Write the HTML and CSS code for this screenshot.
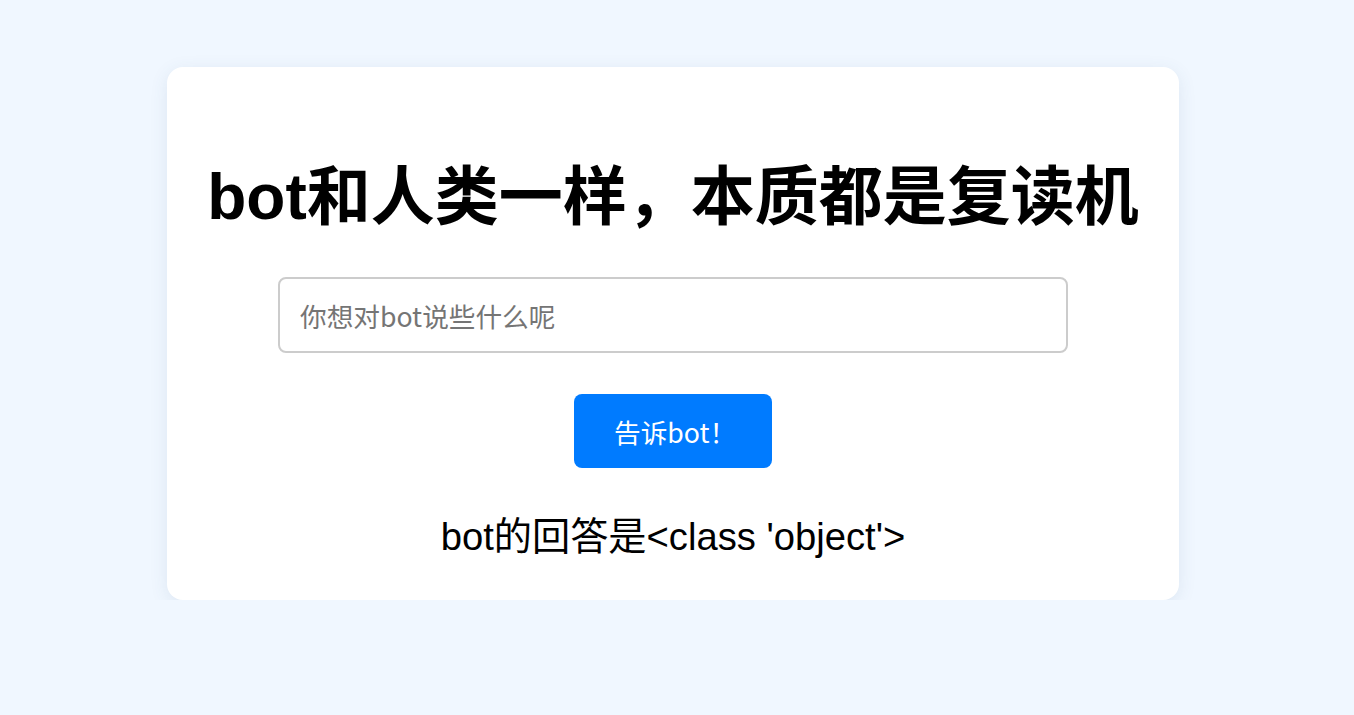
FILE: index.html
```html
<!DOCTYPE html>
<html lang="zh">
<head>
<meta charset="utf-8">
<title>复读机</title>
<link rel="stylesheet" href="styles.css">
</head>
<body>
<div class="page">
  <main class="card">
    <h1 class="title">bot和人类一样，本质都是复读机</h1>
    <input class="ask" type="text" placeholder="你想对bot说些什么呢">
    <button class="send" type="button">告诉bot！</button>
    <p class="answer">bot的回答是&lt;class 'object'&gt;</p>
  </main>
</div>
</body>
</html>
```
FILE: styles.css
```css
* { box-sizing: border-box; }
html, body {
  margin: 0;
  padding: 0;
  background: #f0f7ff;
  font-family: "Liberation Sans", "Noto Sans CJK SC", sans-serif;
}
.page {
  display: flex;
  justify-content: center;
  padding: 67px 8px 0 0;
}
.card {
  width: 1012px;
  background: #ffffff;
  border-radius: 16px;
  box-shadow: 0 4px 18px rgba(60, 90, 130, 0.10);
  display: flex;
  flex-direction: column;
  align-items: center;
  padding: 90px 0 40px;
}
.title {
  margin: 0;
  font-size: 64px;
  line-height: 80px;
  font-weight: bold;
  color: #000;
}
.ask {
  margin-top: 40px;
  width: 790px;
  height: 76px;
  border: 2px solid #cccccc;
  border-radius: 8px;
  padding: 0 20px;
  font-family: "Noto Sans CJK SC", "Liberation Sans", sans-serif;
  font-size: 26.67px;
  color: #333;
  outline: none;
}
.ask::placeholder { color: #757575; }
.send {
  margin-top: 41px;
  width: 198px;
  height: 74px;
  padding: 0 0 0 40px;
  text-align: left;
  border: none;
  border-radius: 8px;
  background: #007bff;
  color: #fff;
  font-family: "Noto Sans CJK SC", "Liberation Sans", sans-serif;
  font-size: 26.67px;
  cursor: pointer;
}
.answer {
  margin: 46px 0 0;
  font-size: 38.2px;
  line-height: 46px;
  color: #000;
}
```
